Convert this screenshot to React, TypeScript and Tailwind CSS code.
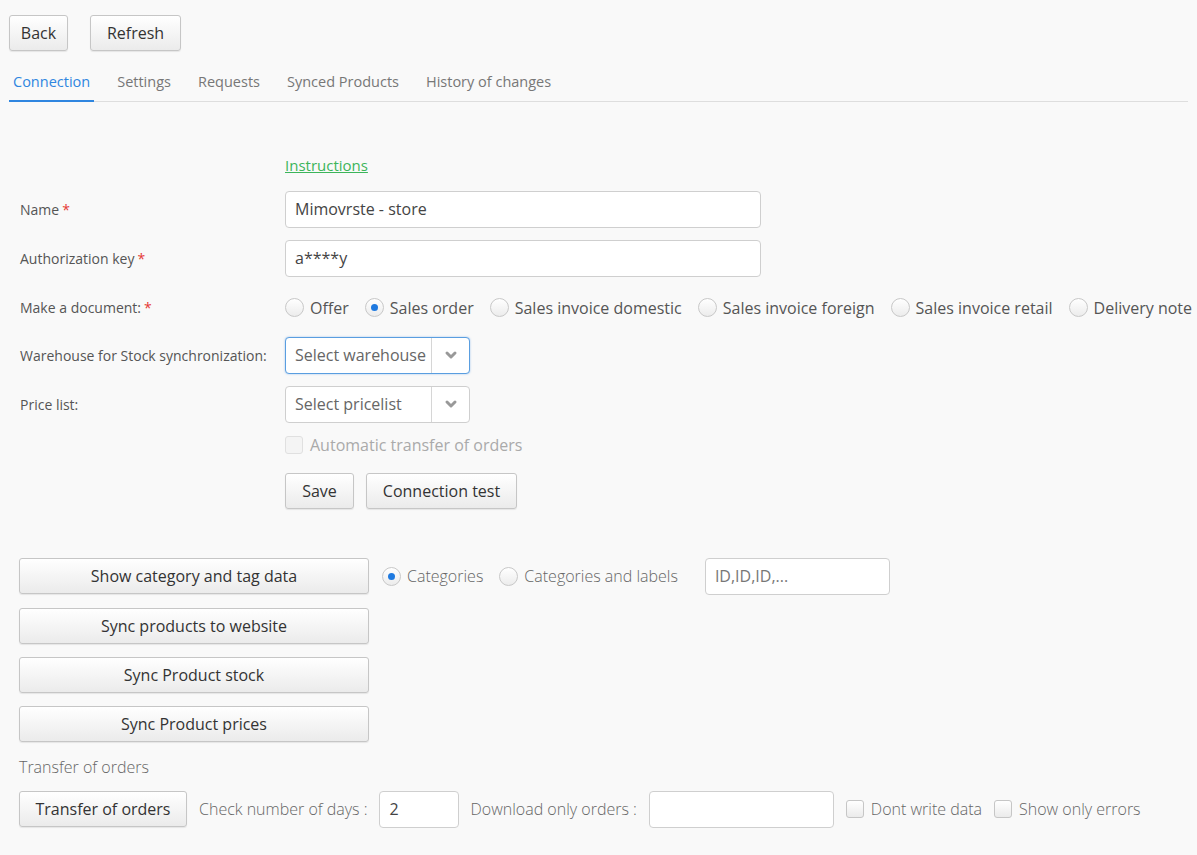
import { ChevronDown } from "lucide-react";
import type { ReactNode } from "react";

const font = { fontFamily: '"Open Sans", "Liberation Sans", sans-serif' };

function Btn({ children, className = "" }: { children: ReactNode; className?: string }) {
  return (
    <button
      className={
        "h-9 shrink-0 rounded-[3px] border border-[#c6c6c6] bg-linear-to-b from-white to-[#ebebeb] text-[16px] text-[#333] shadow-[0_1px_1px_rgba(0,0,0,0.08)] " +
        className
      }
    >
      {children}
    </button>
  );
}

function Radio({ label, checked = false, light = false }: { label: string; checked?: boolean; light?: boolean }) {
  return (
    <label className={"flex items-center gap-[6px] text-[16px] " + (light ? "font-light text-[#666]" : "text-[#555]")}>
      <span className="flex h-[19px] w-[19px] shrink-0 items-center justify-center rounded-full border border-[#c8c8c8] bg-linear-to-b from-white to-[#ececec]">
        {checked && <span className="h-[7px] w-[7px] rounded-full bg-[#1f7ae0]" />}
      </span>
      {label}
    </label>
  );
}

function Check({ label, disabled = false }: { label: string; disabled?: boolean }) {
  return (
    <label
      className={
        "flex items-center gap-[7px] " +
        (disabled ? "text-[16px] text-[#aaa]" : "text-[16px] font-light text-[#666]")
      }
    >
      <span
        className={
          "h-[18px] w-[18px] shrink-0 rounded-[3px] border " +
          (disabled
            ? "border-[#e0e0e0] bg-[#f4f4f4]"
            : "border-[#c6c6c6] bg-linear-to-b from-white to-[#ebebeb]")
        }
      />
      {label}
    </label>
  );
}

function Select({ text, focused = false }: { text: string; focused?: boolean }) {
  return (
    <div
      className={
        "flex h-[37px] w-[185px] shrink-0 items-center rounded-[4px] bg-white " +
        (focused
          ? "border border-[#5a9ee0] shadow-[0_0_2px_rgba(60,140,230,0.5)]"
          : "border border-[#cfcfcf]")
      }
    >
      <span className="flex-1 pl-[9px] text-[16px] text-[#666]">{text}</span>
      <span className="flex h-full w-[38px] items-center justify-center border-l border-[#d6d6d6] text-[#999]">
        <ChevronDown size={16} strokeWidth={4.5} />
      </span>
    </div>
  );
}

function Row({ label, req = false, children, className = "" }: { label: string; req?: boolean; children: ReactNode; className?: string }) {
  return (
    <div className={"flex items-center " + className}>
      <div className="w-[265px] shrink-0 text-[14px] text-[#555]">
        {label}
        {req && <span className="ml-[3px] text-[#e53935]">*</span>}
      </div>
      {children}
    </div>
  );
}

export default function App() {
  const tabs = ["Connection", "Settings", "Requests", "Synced Products", "History of changes"];
  return (
    <div className="min-h-[855px] bg-[#f9f9f9] px-[9px] pt-[15px]" style={font}>
      <div className="flex gap-[22px]">
        <Btn className="w-[59px]">Back</Btn>
        <Btn className="w-[91px]">Refresh</Btn>
      </div>

      <div className="mt-[19px] flex border-b border-[#dedede]">
        {tabs.map((t, i) => (
          <div
            key={t}
            className={
              "-mb-px mr-[19px] border-b-2 px-[4px] pt-[1px] pb-[7px] text-[14.5px] " +
              (i === 0 ? "border-[#2f86e0] text-[#2f86e0]" : "border-transparent text-[#777]")
            }
          >
            {t}
          </div>
        ))}
      </div>

      <div className="pl-[11px]">
        <div className="mt-[51px] pl-[265px]">
          <a className="text-[15px] text-[#3cb55a] underline">Instructions</a>
        </div>

        <Row label="Name" req className="mt-[14px]">
          <div className="flex h-[37px] w-[476px] items-center rounded-[4px] border border-[#cfcfcf] bg-white pl-[9px] text-[16px] text-[#444]">
            Mimovrste - store
          </div>
        </Row>
        <Row label="Authorization key" req className="mt-[12px]">
          <div className="flex h-[37px] w-[476px] items-center rounded-[4px] border border-[#cfcfcf] bg-white pl-[9px] text-[16px] text-[#444]">
            a****y
          </div>
        </Row>
        <Row label="Make a document:" req className="mt-[13px] h-[36px]">
          <div className="flex gap-[16px] whitespace-nowrap">
            <Radio label="Offer" />
            <Radio label="Sales order" checked />
            <Radio label="Sales invoice domestic" />
            <Radio label="Sales invoice foreign" />
            <Radio label="Sales invoice retail" />
            <Radio label="Delivery note" />
          </div>
        </Row>
        <Row label="Warehouse for Stock synchronization:" className="mt-[11px]">
          <Select text="Select warehouse" focused />
        </Row>
        <Row label="Price list:" className="mt-[12px]">
          <Select text="Select pricelist" />
        </Row>
        <div className="mt-[10px] pl-[265px]">
          <Check label="Automatic transfer of orders" disabled />
        </div>
        <div className="mt-[16px] flex gap-[12px] pl-[265px]">
          <Btn className="w-[69px]">Save</Btn>
          <Btn className="w-[151px]">Connection test</Btn>
        </div>
      </div>

      <div className="mt-[49px] pl-[10px]">
        <div className="flex items-center">
          <Btn className="w-[350px]">Show category and tag data</Btn>
          <div className="ml-[13px] flex gap-[16px]">
            <Radio label="Categories" checked light />
            <Radio label="Categories and labels" light />
          </div>
          <div className="ml-[27px] flex h-[37px] w-[185px] items-center rounded-[4px] border border-[#cfcfcf] bg-white pl-[9px] text-[16px] text-[#777]">
            ID,ID,ID,...
          </div>
        </div>
        <div className="mt-[13px] flex flex-col gap-[13px]">
          <Btn className="w-[350px]">Sync products to website</Btn>
          <Btn className="w-[350px]">Sync Product stock</Btn>
          <Btn className="w-[350px]">Sync Product prices</Btn>
        </div>
        <div className="mt-[13px] text-[16px] font-light text-[#666]">Transfer of orders</div>
        <div className="mt-[12px] flex items-center whitespace-nowrap">
          <Btn className="w-[168px]">Transfer of orders</Btn>
          <span className="ml-[12px] text-[16px] font-light text-[#666]">Check number of days :</span>
          <div className="ml-[11px] flex h-[37px] w-[80px] items-center rounded-[4px] border border-[#cfcfcf] bg-white pl-[10px] text-[16px] text-[#444]">
            2
          </div>
          <span className="ml-[12px] text-[16px] font-light text-[#666]">Download only orders :</span>
          <div className="ml-[12px] h-[37px] w-[185px] rounded-[4px] border border-[#cfcfcf] bg-white" />
          <div className="ml-[12px] flex gap-[12px]">
            <Check label="Dont write data" />
            <Check label="Show only errors" />
          </div>
        </div>
      </div>
    </div>
  );
}
